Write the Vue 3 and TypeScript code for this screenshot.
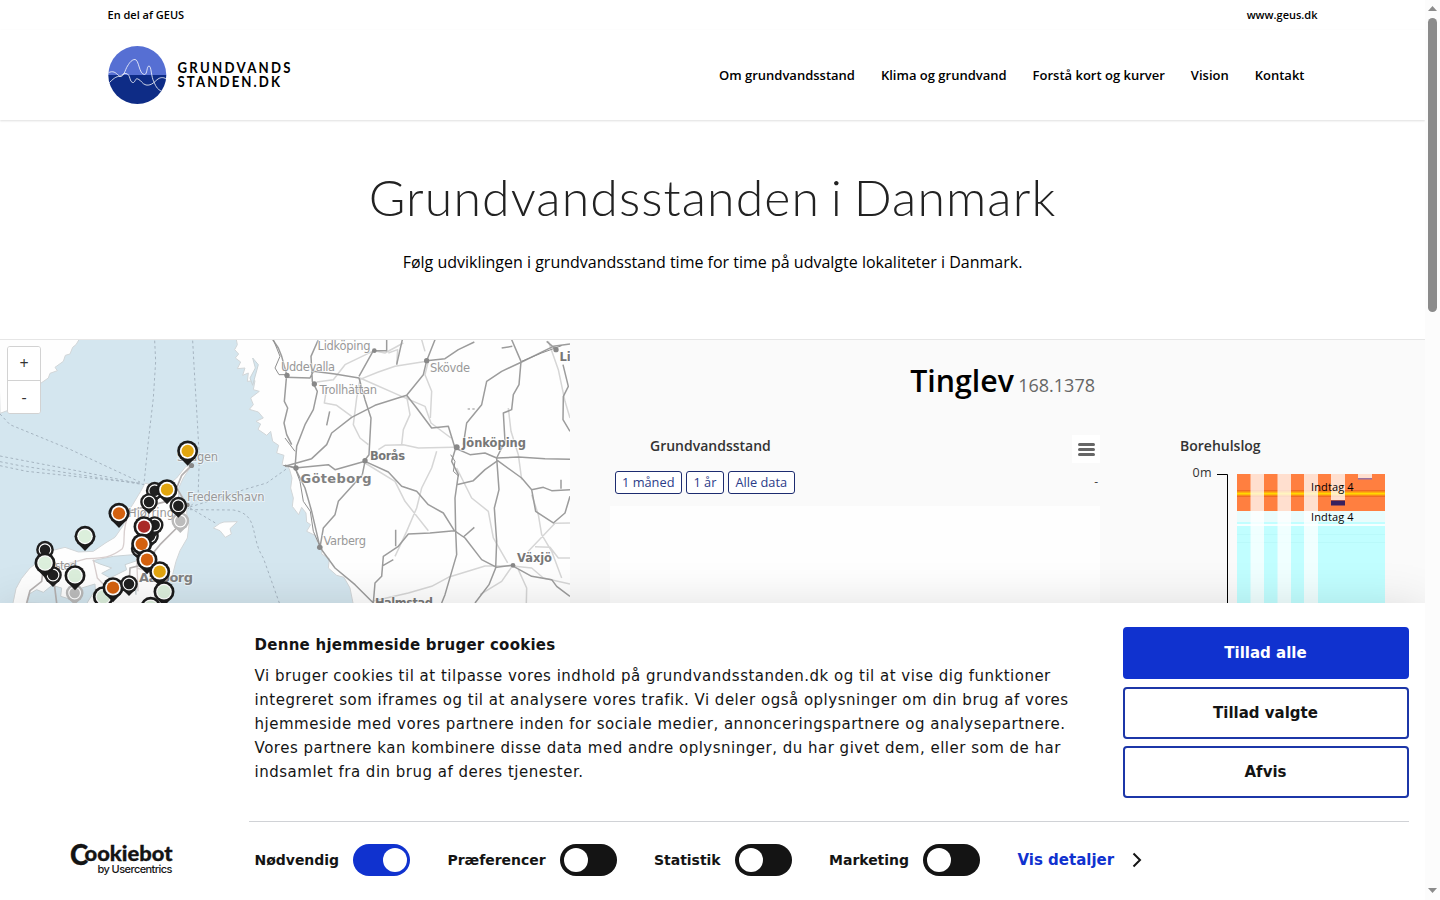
<script setup lang="ts">
interface Pin {
  x: number
  y: number
  kind: 'yellow' | 'orange' | 'red' | 'pale' | 'black' | 'grey'
}

const navItems: string[] = ['Om grundvandsstand', 'Klima og grundvand', 'Forstå kort og kurver', 'Vision', 'Kontakt']
const ranges: string[] = ['1 måned', '1 år', 'Alle data']

const pins: Pin[] = [
  { x: 541, y: 549, kind: 'grey' },
  { x: 224, y: 765, kind: 'grey' },
  { x: 563, y: 339, kind: 'yellow' },
  { x: 464, y: 458, kind: 'black' },
  { x: 501, y: 455, kind: 'yellow' },
  { x: 447, y: 492, kind: 'black' },
  { x: 535, y: 503, kind: 'black' },
  { x: 357, y: 526, kind: 'orange' },
  { x: 450, y: 594, kind: 'black' },
  { x: 464, y: 561, kind: 'black' },
  { x: 432, y: 566, kind: 'red' },
  { x: 419, y: 632, kind: 'black' },
  { x: 425, y: 618, kind: 'orange' },
  { x: 441, y: 665, kind: 'orange' },
  { x: 479, y: 701, kind: 'yellow' },
  { x: 255, y: 595, kind: 'pale' },
  { x: 135, y: 635, kind: 'black' },
  { x: 159, y: 711, kind: 'black' },
  { x: 135, y: 675, kind: 'pale' },
  { x: 225, y: 713, kind: 'pale' },
  { x: 310, y: 776, kind: 'pale' },
  { x: 339, y: 749, kind: 'orange' },
  { x: 387, y: 738, kind: 'black' },
  { x: 492, y: 761, kind: 'pale' },
  { x: 452, y: 808, kind: 'pale' },
]

const fills: Record<Pin['kind'], string> = {
  yellow: '#e2a610',
  orange: '#d4610f',
  red: '#a92b27',
  pale: '#dcefdc',
  black: '#1f1f1f',
  grey: '#b9b9b9',
}

const isSmall = (p: Pin): boolean => p.kind === 'black' || p.kind === 'grey'

const toggles: { label: string; on: boolean }[] = [
  { label: 'Nødvendig', on: true },
  { label: 'Præferencer', on: false },
  { label: 'Statistik', on: false },
  { label: 'Marketing', on: false },
]
</script>

<template>
  <div class="window">
    <div class="page">
      <div class="topbar">
        <span>En del af GEUS</span>
        <span>www.geus.dk</span>
      </div>
      <header class="header">
        <svg class="logo" width="184" height="60" viewBox="0 0 184 60">
          <defs>
            <clipPath id="disc"><circle cx="29.3" cy="30" r="29" /></clipPath>
          </defs>
          <g clip-path="url(#disc)">
            <rect width="60" height="30" fill="#566fd3" />
            <rect y="30" width="60" height="30" fill="#0e2c86" />
            <g fill="none" stroke="#fff" stroke-width="0.8">
              <path d="M0 39C5 34 8 31 12 31.5C16 32 17 25 19.500 21C22 17 24 14.500 27 14.500C31 14.500 31 29.500 36.500 29.500C39.500 29.500 38.500 21 41 21C43.500 21 43 32 46 37C48 42 50 45.500 56 47" />
              <path d="M0 28C5 25 8 28 10 30C13 33 14 28 18 28.500C23 29 21 38 25.500 37.500C28 36 27 33 30 34C33 35 34 39 38 40C44 41 47 36 50 34C53 32 56 32 60 35" />
            </g>
          </g>
          <g class="logo-text" transform="scale(.88 1)">
            <text x="79" y="28" textLength="128.500">GRUNDVANDS</text>
            <text x="79" y="42" textLength="116.500">STANDEN.DK</text>
          </g>
        </svg>
        <nav class="nav">
          <a v-for="item in navItems" :key="item">{{ item }}</a>
        </nav>
      </header>

      <section class="hero">
        <h1>Grundvandsstanden i Danmark</h1>
        <p>Følg udviklingen i grundvandsstand time for time på udvalgte lokaliteter i Danmark.</p>
      </section>

      <section class="content">
        <div class="map">
          <svg width="570" height="270" viewBox="0 340 570 270">
            <rect y="340" width="570" height="270" fill="#d4e6ef" />
            <g transform="translate(0 338) scale(.33333)" stroke-linejoin="round">
              <g fill="#fefefe" stroke="#d2d6d8" stroke-width="3">
                <path d="M-5 0H240L228 20L218 28L210 48L196 52L190 70L165 88L172 98L150 106L145 120L122 136L95 170L60 190L30 215L0 226Z" />
                <path d="M708 0L712 20L704 35L716 48L706 60L722 72L712 92L735 90L728 112L745 105L742 130L765 128L760 155L778 160L752 180L760 200L748 214L775 222L790 240L768 250L782 258L774 274L800 292L812 280L818 310L836 322L830 345L852 352L846 380L868 392L876 420L872 450L880 480L877 505L896 530L905 508L918 525L920 552L932 560L920 580L945 592L952 612L968 625L965 648L988 662L985 690L1010 712L1032 718L1050 750L1060 800H1720V0Z" />
                <path d="M575 382L558 385L530 420L500 444L470 440L435 436L422 460L398 500L384 520L370 562L345 598L318 614L280 640L235 642L195 628L155 638L128 662L90 690L64 722L48 752L38 800H490L495 760L516 718L528 670L540 638L562 600L567 560L560 525L562 500L536 478L535 452L550 420Z" />
                <path d="M640 570L660 556L672 552L712 551L690 572L694 588L676 598L660 578Z" />
              </g>
              <g fill="#d4e6ef" stroke="#cbd3d6" stroke-width="3">
                <path d="M278 668L340 655L400 650L450 655L405 670L375 680L380 695L330 720L305 706L335 690L300 678Z" />
                <path d="M82 795L88 768L110 755L130 763L156 742L185 750L182 775L215 785L245 750L285 738L286 755L258 800Z" />
                <path d="M395 735L409 742L408 770L402 740Z" />
                <path d="M758 60L775 80L764 120L758 142L750 120L766 90Z" />
              </g>
              <g fill="none" stroke="#a5b4c0" stroke-width="3" stroke-dasharray="8 8">
                <path d="M464 8L467 70L460 180L445 310L432 436" />
                <path d="M578 8L583 100L592 250L598 360L594 480L565 512" />
                <path d="M0 228L30 260L210 334L420 432" />
                <path d="M0 354L240 400L425 438M0 371L60 383L270 415L432 440M0 383L80 400L270 420L430 436" />
                <path d="M570 507L640 485L735 454L800 435L866 388M570 515L700 516C780 530 748 595 790 660L838 795M570 510L648 556" />
              </g>
              <g fill="none" stroke="#d8cfcf" stroke-width="4">
                <path d="M390 520C360 580 380 610 367 632C330 660 310 660 260 662L120 700M280 665L292 720L340 770M410 660L414 760M410 690L500 715" />
              </g>
              <g fill="none" stroke="#b5b1b1" stroke-width="5">
                <path d="M572 385L545 412L530 450L560 500M560 502L530 570L480 620L430 680L390 690L388 730L340 760M130 690L125 730L90 758L80 795M162 730L170 795M385 520L440 505L500 490" />
              </g>
            </g>

            <g transform="translate(285 338) scale(.33333)" fill="none" stroke-linejoin="round">
              <g stroke="#d6d6d6" stroke-width="4.500">
                <path d="M267 38L180 80L145 125L95 132M355 15L300 45L267 38M425 70L330 85L280 102L225 124L215 180L205 260L225 300L250 320M225 120L350 175L420 205L438 255L498 300M125 150L118 195L155 202L200 235" />
                <path d="M410 5L420 40M430 70L420 110L440 160L436 240M365 175L375 230L355 275L350 320M355 320L400 330L505 328M280 335L300 322L355 320M455 340L440 390L410 450L395 510L365 580L330 655M515 390L560 480L610 520L625 600L668 675M240 375L330 430L360 490L430 578M262 790L370 765L440 745L490 718L600 684L680 684M700 695L725 750L724 795M790 10L820 95L840 190L855 240M670 210L678 280L700 350L710 425M740 470L760 530L770 590L800 640L830 720M855 555L810 556L730 640M750 626L795 628L820 660L855 660M690 685L740 690L775 720L855 738M585 770L650 730L682 684M310 45L338 35L335 80" />
              </g>
              <g stroke="#9c9c9c" stroke-width="4.500">
                <path d="M-40 0L-20 30L-10 55L5 110L-2 190L8 210L-3 255L5 290L20 320M100 5L78 55L82 130L97 160L85 215L60 260L35 325L30 390M0 118L75 120L85 100L150 108L222 120L240 185L258 240L252 350L238 368M305 5V38L265 38L222 115M352 5L335 80M450 5L425 68L415 110L365 172L270 202L200 238L140 285L125 320L80 362L0 385M425 68L480 62L520 35L568 12M680 5L708 70L702 140L685 170L680 215L655 225L660 310L635 360L642 455L628 510L635 610L632 690L612 740L570 795" />
                <path d="M855 18L805 25L710 72L650 100L605 130L590 200L545 255L535 320M365 172L395 210L440 270L490 265L510 330L555 350L600 345L635 360L700 357L780 362L855 364M512 330L500 370L520 410L510 480L512 578L515 650L480 770L470 795M515 440L565 428L600 395L638 368L710 420L740 455L752 520L805 555L840 525L855 475M740 455L775 448L800 458L855 455M828 425V452M834 80L850 145L835 175L834 245L855 280" />
                <path d="M0 382L30 390L60 450L80 520L105 628L150 690L210 740L265 795M30 390L130 380L150 395L240 370L232 410L160 490L150 530L115 570L105 628M240 370L310 402L350 445L395 460L430 500L475 525L508 578L435 585L370 588L340 625L295 655L290 715L270 735L265 795M508 578L540 600L590 665L635 688L680 682L740 715L800 725L815 745L855 775M535 597L568 568M332 575V625M295 682L325 665M134 220L125 262" />
                <path d="M650 30L682 25M785 10L814 35" />
              </g>
              <g stroke="#8f8f8f" stroke-width="3">
                <path d="M30 388L-5 382M0 300L30 340M30 390L45 430L55 490L76 520L85 580L105 625M497 350L510 370L505 400L522 415M-35 5L-15 55L-30 90L-18 110L8 110M710 70L770 45L830 23" />
                <path d="M548 213H555M562 213H569" />
              </g>
              <g fill="#888">
                <circle cx="88" cy="138" r="8" /><circle cx="268" cy="38" r="7" /><circle cx="425" cy="68" r="8" />
                <circle cx="6" cy="112" r="8" /><circle cx="240" cy="368" r="8" /><circle cx="515" cy="328" r="9" />
                <circle cx="33" cy="390" r="8" /><circle cx="104" cy="628" r="8" /><circle cx="684" cy="682" r="7" /><circle cx="813" cy="35" r="8" />
              </g>
            </g>
            <g fill="#888"><circle cx="191.5" cy="465.5" r="2.6" /><circle cx="187.500" cy="505" r="2.200" /></g>

            <g class="place">
              <text x="317.500" y="350" textLength="53">Lidköping</text>
              <text x="281" y="371" textLength="54">Uddevalla</text>
              <text x="319.500" y="394" textLength="57.500">Trollhättan</text>
              <text x="430" y="372" textLength="40">Skövde</text>
              <text x="323.500" y="545" textLength="42.500">Varberg</text>
              <text x="177" y="461" textLength="41">Skagen</text>
              <text x="187" y="500.500" textLength="77.500">Frederikshavn</text>
              <text x="128" y="517" textLength="46">Hjørring</text>
              <text x="40" y="570" textLength="37">Thisted</text>
            </g>
            <g class="place town">
              <text x="370" y="460" textLength="35">Borås</text>
              <text x="462" y="447" textLength="64">Jönköping</text>
              <text x="517" y="562" textLength="35">Växjö</text>
              <text x="375" y="607" textLength="58">Halmstad</text>
              <text x="559.500" y="361">Li</text>
            </g>
            <g class="place city">
              <text x="300.500" y="482.500" textLength="71">Göteborg</text>
              <text x="139" y="582" textLength="54">Aalborg</text>
            </g>

            <g transform="translate(0 338) scale(.33333)">
              <g v-for="(p, i) in pins" :key="i" :transform="`translate(${p.x} ${p.y})`">
                <template v-if="isSmall(p)">
                  <path d="M-20 16L0 36L20 16Z" :fill="fills[p.kind]" />
                  <circle r="26.500" :fill="fills[p.kind]" />
                  <circle r="17.500" :fill="p.kind === 'grey' ? '#bcbcbc' : '#1f1f1f'" stroke="#fff" stroke-width="3.500" />
                </template>
                <template v-else>
                  <path d="M-23 20L0 44L23 20Z" fill="#1b1b1b" />
                  <circle r="31.500" fill="#1b1b1b" />
                  <circle r="23.500" fill="#fff" />
                  <circle :r="p.kind === 'pale' ? 20 : 18.500" :fill="fills[p.kind]" />
                </template>
              </g>
            </g>
          </svg>
          <div class="zoom">
            <button>+</button>
            <button>-</button>
          </div>
        </div>

        <div class="chart">
          <h2>Tinglev <small>168.1378</small></h2>
          <div class="chart-head">
            <h3>Grundvandsstand</h3>
            <button class="menu" aria-label="Menu"><i></i><i></i><i></i></button>
          </div>
          <div class="ranges">
            <button v-for="r in ranges" :key="r">{{ r }}</button>
            <span>-</span>
          </div>
          <div class="plot"></div>
        </div>

        <div class="log">
          <h3>Borehulslog</h3>
          <svg width="225" height="150" viewBox="1180 460 225 150">
            <text class="axis" x="1192.500" y="477" textLength="19">0m</text>
            <path d="M1217 474.500H1227.500V610" fill="none" stroke="#000" />
            <rect x="1237" y="474" width="148" height="37" fill="#ff7f40" />
            <rect x="1237" y="490" width="148" height="7" fill="#f06a24" />
            <rect x="1237" y="491.500" width="148" height="4" fill="#ffad0d" />
            <rect x="1237" y="493" width="148" height="1.300" fill="#ffd800" />
            <rect x="1237" y="511" width="148" height="11" fill="#e9fcfc" />
            <rect x="1237" y="522" width="148" height="90" fill="#c1feff" />
            <rect x="1237" y="524" width="148" height="2" fill="#f5ffff" />
            <path d="M1237 534.500H1385M1237 542.500H1385" stroke="#b4f5f6" stroke-width=".6" />
            <g fill="#fff" fill-opacity=".75">
              <rect x="1250.500" y="474" width="13.500" height="136" />
              <rect x="1277.500" y="474" width="13.500" height="136" />
              <rect x="1304" y="474" width="14" height="136" />
              <rect x="1331" y="474" width="14" height="26" />
              <rect x="1358" y="474" width="14" height="4" />
            </g>
            <rect x="1331" y="500.500" width="14" height="5" fill="#38205f" />
            <rect x="1358" y="478" width="14" height="1.500" fill="#9a719e" />
            <text class="intake" x="1311" y="491" textLength="42.500">Indtag 4</text>
            <text class="intake" x="1311" y="521" textLength="42.500">Indtag 4</text>
          </svg>
        </div>
      </section>
    </div>

    <div class="scrollbar">
      <svg width="15" height="900" viewBox="0 0 15 900" fill="#8b8b8b">
        <path d="M3 11L7.500 6L12 11Z" />
        <rect x="3" y="18" width="9" height="294" rx="4.500" />
        <path d="M3 888L7.500 893L12 888Z" />
      </svg>
    </div>

    <div class="cookie">
      <div class="cookie-main">
        <div class="cookie-copy">
          <h4>Denne hjemmeside bruger cookies</h4>
          <p>
            Vi bruger cookies til at tilpasse vores indhold på grundvandsstanden.dk og til at vise dig funktioner<br />
            integreret som iframes og til at analysere vores trafik. Vi deler også oplysninger om din brug af vores<br />
            hjemmeside med vores partnere inden for sociale medier, annonceringspartnere og analysepartnere.<br />
            Vores partnere kan kombinere disse data med andre oplysninger, du har givet dem, eller som de har<br />
            indsamlet fra din brug af deres tjenester.
          </p>
        </div>
        <div class="cookie-buttons">
          <button class="primary">Tillad alle</button>
          <button>Tillad valgte</button>
          <button>Afvis</button>
        </div>
      </div>
      <div class="cookie-foot">
        <svg class="cookiebot" width="110" height="34" viewBox="68 844 110 34">
          <text class="brand big" x="70" y="866">C</text>
          <text class="brand" x="84.500" y="862" textLength="88" lengthAdjust="spacingAndGlyphs">ookiebot</text>
          <text class="byline" x="97.500" y="874" textLength="75">by Usercentrics</text>
        </svg>
        <div class="toggles">
          <label v-for="t in toggles" :key="t.label" class="toggle">
            <span>{{ t.label }}</span>
            <i :class="{ on: t.on }"></i>
          </label>
          <a class="details">
            Vis detaljer
            <svg width="10" height="16" viewBox="0 0 10 16"><path d="M1.500 1.500L8 8L1.500 14.500" fill="none" stroke="#141414" stroke-width="2" /></svg>
          </a>
        </div>
      </div>
    </div>
  </div>
</template>

<style>
body {
  margin: 0;
  overflow: hidden;
}
</style>

<style scoped>
.window {
  position: relative;
  display: flex;
  width: 1440px;
  height: 900px;
  overflow: hidden;
  background: #fff;
  color: #000;
  font-family: 'Open Sans', sans-serif;
}
.window * {
  box-sizing: border-box;
}
button {
  font-family: inherit;
  padding: 0;
  margin: 0;
}
.page {
  width: 1425px;
}
.scrollbar {
  width: 15px;
  background: #fcfcfc;
}
.topbar {
  display: flex;
  justify-content: space-between;
  height: 30px;
  padding: 0 107.5px;
  font-size: 11px;
  line-height: 30px;
  font-weight: 600;
}
.header {
  display: flex;
  justify-content: space-between;
  align-items: center;
  height: 90px;
  padding: 0 120.5px 0 108px;
  box-shadow: 0 1px 2px rgba(0, 0, 0, 0.13);
}
.logo-text text {
  font: 700 15px Lato, sans-serif;
}
.nav {
  display: flex;
  gap: 26px;
  font-size: 13px;
  font-weight: 600;
}
.hero {
  height: 219px;
  padding-top: 42px;
  text-align: center;
}
.hero h1 {
  margin: 0;
  font: 300 50px/70px Lato, sans-serif;
  letter-spacing: 1.1px;
  word-spacing: -4px;
  color: #222;
}
.hero p {
  margin: 18px 0 0;
  font-size: 16px;
  line-height: 24px;
}
.content {
  display: flex;
  height: 561px;
  background: #fafafa;
  border-top: 1px solid #e6e6e6;
}
.map {
  position: relative;
  width: 570px;
  overflow: hidden;
}
.map > svg {
  display: block;
}
.place text {
  font: 11.5px 'DejaVu Sans', sans-serif;
  fill: #999;
  stroke: rgba(255, 255, 255, 0.5);
  stroke-width: 2px;
  paint-order: stroke;
}
.place.town text {
  font-weight: 700;
  font-size: 11.5px;
  fill: #777;
}
.place.city text {
  font-weight: 700;
  font-size: 13px;
  fill: #818181;
}
.zoom {
  position: absolute;
  left: 7px;
  top: 6px;
  width: 34px;
  height: 68px;
  border: 1px solid #d2d2d2;
  border-radius: 3px;
  background: #fff;
  overflow: hidden;
}
.zoom button {
  display: block;
  width: 32px;
  height: 33px;
  border: 0;
  background: #fff;
  font-size: 16px;
  line-height: 33px;
  color: #333;
}
.zoom button + button {
  border-top: 1px solid #d2d2d2;
  line-height: 30px;
}
.chart {
  width: 530px;
  padding: 18px 0 0 40px;
}
.chart h2 {
  margin: 0;
  padding-right: 5px;
  text-align: right;
  font-size: 30.3px;
  line-height: 46px;
  font-weight: 600;
}
.chart h2 small {
  margin-left: -3.5px;
  font-size: 18px;
  font-weight: 400;
  color: #666;
}
h3 {
  margin: 0;
  font-size: 14px;
  line-height: 20px;
  font-weight: 600;
  color: #333;
}
.chart-head {
  display: flex;
  justify-content: space-between;
  height: 28px;
  margin-top: 31px;
  padding-left: 40px;
  transform: none;
}
.chart h2 + .chart-head {
  margin-top: 27px;
}
.chart-head h3 {
  margin-top: 1px;
}
.menu {
  display: flex;
  flex-direction: column;
  align-items: center;
  justify-content: center;
  gap: 2px;
  width: 28px;
  height: 28px;
  padding-left: 1px;
  border: 0;
  background: #fff;
}
.menu i {
  width: 17px;
  height: 3px;
  border-radius: 1.5px;
  background: #666;
}
.ranges {
  display: flex;
  gap: 4px;
  margin-top: 8px;
  padding: 0 2px 0 5px;
}
.ranges button {
  height: 23px;
  padding: 0 7px 0 6px;
  border: 1px solid #1d2c70;
  border-radius: 3px;
  background: #fff;
  font-size: 12.8px;
  line-height: 21px;
  color: #2b3c89;
}
.ranges span {
  margin-left: auto;
  font-size: 12px;
  line-height: 22px;
  color: #444;
}
.plot {
  height: 200px;
  margin-top: 12px;
  background: #fefefe;
}
.log {
  padding: 96px 0 0 80px;
}
.log svg {
  display: block;
  margin-top: 4px;
}
.axis {
  font: 12.5px 'Open Sans', sans-serif;
  fill: #333;
}
.intake {
  font: 11px 'Open Sans', sans-serif;
}
.cookie {
  position: absolute;
  left: 0;
  bottom: 0;
  width: 1425px;
  height: 297px;
  padding: 24px 16px 0 249px;
  background: #fff;
  box-shadow: 0 8px 48px rgba(0, 0, 0, 0.16);
  clip-path: inset(-80px 0 0 0);
  font-family: 'DejaVu Sans', sans-serif;
  color: #141414;
}
.cookie-main {
  display: flex;
  justify-content: space-between;
  height: 195px;
  border-bottom: 1px solid #d0d2d6;
}
.cookie-copy {
  padding-left: 5.6px;
}
.cookie-copy h4 {
  margin: 6px 0 7px;
  font-size: 15px;
  line-height: 24px;
  letter-spacing: 0.25px;
}
.cookie-copy p {
  margin: 0;
  font-size: 15px;
  line-height: 24px;
  letter-spacing: 0.5px;
  white-space: nowrap;
}
.cookie-buttons {
  display: flex;
  flex-direction: column;
  gap: 7.5px;
}
.cookie-buttons button {
  width: 286px;
  height: 52px;
  padding-right: 1px;
  border: 2px solid #1c36a8;
  border-radius: 4px;
  background: #fff;
  font-size: 15px;
  font-weight: 700;
  color: #141414;
}
.cookie-buttons .primary {
  border-color: #1032cf;
  background: #1032cf;
  color: #fff;
}
.cookie-foot {
  display: flex;
  align-items: center;
  height: 76px;
  margin-left: -181px;
}
.cookiebot {
  flex: none;
  margin-right: 76.6px;
}
.brand {
  font: 900 20.5px Lato, sans-serif;
  fill: #141414;
  stroke: #141414;
  stroke-width: 0.3px;
}
.big {
  font-size: 27.5px;
}
.byline {
  font: 500 11px Inter, sans-serif;
  fill: #141414;
}
.toggles {
  display: flex;
  align-items: center;
  gap: 37.5px;
}
.toggle {
  display: flex;
  align-items: center;
  gap: 14px;
  font-size: 14px;
  font-weight: 700;
  letter-spacing: -0.04px;
}
.toggle i {
  display: flex;
  width: 57px;
  height: 32px;
  padding: 4px;
  border-radius: 16px;
  background: #141414;
}
.toggle i::after {
  content: '';
  width: 24px;
  height: 24px;
  border-radius: 50%;
  background: #fff;
}
.toggle i.on {
  justify-content: flex-end;
  padding-right: 3px;
  background: #1032cf;
}
.details {
  display: flex;
  align-items: center;
  gap: 18px;
  font-size: 15px;
  font-weight: 700;
  color: #1032cf;
}
</style>
